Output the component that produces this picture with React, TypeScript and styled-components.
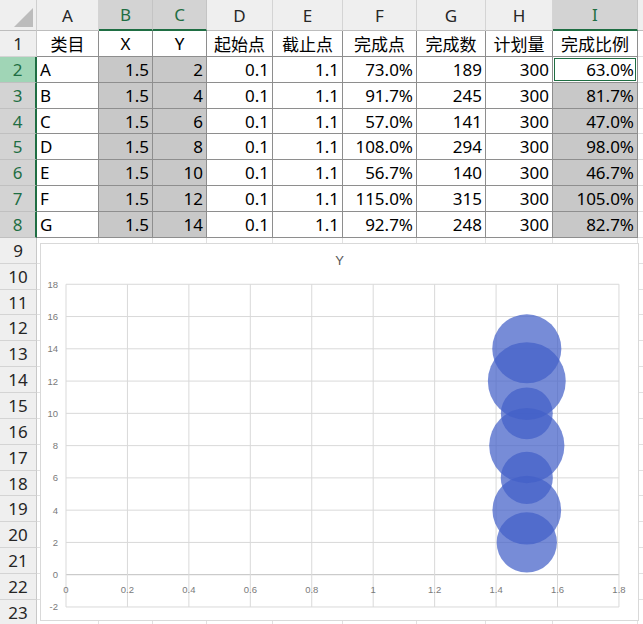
import React from 'react';
import styled, { createGlobalStyle, css } from 'styled-components';

const GlobalStyle = createGlobalStyle`
  html, body {
    margin: 0;
    padding: 0;
    background: #fff;
  }
  body {
    font-family: "Noto Sans", "Noto Sans CJK SC", sans-serif;
  }
`;

const COLS = [37, 62, 54, 54, 66, 70, 74, 69, 67, 85];
const LETTERS = ['A', 'B', 'C', 'D', 'E', 'F', 'G', 'H', 'I', ''];
const SELECTED_COLS = ['B', 'C', 'I'];
const GREEN = '#1f6e43';

const HEADERS = ['类目', 'X', 'Y', '起始点', '截止点', '完成点', '完成数', '计划量', '完成比例'];

const DATA: [string, string, string, string, string, string, string, string, string][] = [
  ['A', '1.5', '2', '0.1', '1.1', '73.0%', '189', '300', '63.0%'],
  ['B', '1.5', '4', '0.1', '1.1', '91.7%', '245', '300', '81.7%'],
  ['C', '1.5', '6', '0.1', '1.1', '57.0%', '141', '300', '47.0%'],
  ['D', '1.5', '8', '0.1', '1.1', '108.0%', '294', '300', '98.0%'],
  ['E', '1.5', '10', '0.1', '1.1', '56.7%', '140', '300', '46.7%'],
  ['F', '1.5', '12', '0.1', '1.1', '115.0%', '315', '300', '105.0%'],
  ['G', '1.5', '14', '0.1', '1.1', '92.7%', '248', '300', '82.7%'],
];

const Sheet = styled.div`
  position: relative;
  display: grid;
  grid-template-columns: ${COLS.map((c) => `${c}px`).join(' ')} 1fr;
  grid-template-rows: 31px repeat(23, 25.86px);
  width: 643px;
  height: 624px;
  overflow: hidden;
`;

const Corner = styled.div`
  position: relative;
  background: #efefef;
  border-right: 1px solid #cfcfcf;
  border-bottom: 1px solid #bdbdbd;

  &::after {
    content: '';
    position: absolute;
    right: 3px;
    bottom: 3px;
    width: 0;
    height: 0;
    border-left: 19px solid transparent;
    border-bottom: 19px solid #bcbcbc;
  }
`;

const ColHeader = styled.div<{ $selected?: boolean }>`
  box-sizing: border-box;
  display: flex;
  align-items: center;
  justify-content: center;
  font-size: 17px;
  color: #262626;
  background: #efefef;
  border-right: 1px solid #d4d4d4;
  border-bottom: 1px solid #bdbdbd;

  ${(p) =>
    p.$selected &&
    css`
      background: #d3d3d3;
      color: ${GREEN};
      border-bottom: 2px solid ${GREEN};
      border-right-color: #c4c4c4;
    `}
`;

type RowState = 'active' | 'selected' | 'none';

const RowHeader = styled.div<{ $state: RowState }>`
  box-sizing: border-box;
  display: flex;
  align-items: center;
  justify-content: center;
  font-size: 17px;
  color: #262626;
  background: #efefef;
  border-right: 1px solid #c8c8c8;
  border-bottom: 1px solid #d4d4d4;

  ${(p) =>
    p.$state !== 'none' &&
    css`
      color: ${GREEN};
      background: ${p.$state === 'active' ? '#a0d5b6' : '#d3d3d3'};
      border-right: 2px solid ${GREEN};
      border-bottom-color: #c0c0c0;
    `}
`;

const Cell = styled.div<{ $align?: 'left' | 'right' | 'center'; $framed?: boolean; $fill?: boolean; $active?: boolean }>`
  box-sizing: border-box;
  display: flex;
  align-items: center;
  justify-content: ${(p) => (p.$align === 'right' ? 'flex-end' : p.$align === 'center' ? 'center' : 'flex-start')};
  padding: 0 3px;
  font-size: 17px;
  color: #000;
  white-space: nowrap;
  overflow: hidden;
  background: ${(p) => (p.$fill ? '#c8c8c8' : '#fff')};
  border-right: 1px solid ${(p) => (p.$framed ? '#8e8e8e' : '#e1e1e1')};
  border-bottom: 1px solid ${(p) => (p.$framed ? '#8e8e8e' : '#e1e1e1')};

  ${(p) =>
    p.$active &&
    css`
      background: #fff;
      box-shadow: inset 0 0 0 1px #fff, inset 0 0 0 2px ${GREEN};
    `}
`;

const ChartBox = styled.div`
  position: absolute;
  left: 40px;
  top: 243px;
  width: 599px;
  height: 378px;
  box-sizing: border-box;
  background: #fff;
  border: 1px solid #d9d9d9;
`;

const ChartSvg = styled.svg`
  display: block;
  font-family: "Liberation Sans", "Noto Sans", sans-serif;
`;

// plot geometry (px inside the chart box)
const X0 = 25;
const X_UNIT = 307.2;
const Y0 = 330.7;
const Y_UNIT = 16.135;
const px = (x: number) => X0 + x * X_UNIT;
const py = (y: number) => Y0 - y * Y_UNIT;

const BubbleChart = () => {
  const xTicks = [0, 0.2, 0.4, 0.6, 0.8, 1, 1.2, 1.4, 1.6, 1.8];
  const yTicks = [18, 16, 14, 12, 10, 8, 6, 4, 2, 0, -2];
  const bubbles = DATA.map((r) => ({ x: parseFloat(r[1]), y: parseFloat(r[2]), size: parseFloat(r[8]) }));

  return (
    <ChartBox>
      <ChartSvg width={597} height={376} viewBox="0 0 597 376">
        <text x={298.5} y={21} textAnchor="middle" fontSize={13} fill="#595959">
          Y
        </text>
        {yTicks.map((t) => (
          <g key={`y${t}`}>
            <line
              x1={px(0)}
              x2={px(1.8)}
              y1={py(t)}
              y2={py(t)}
              stroke={t === 0 ? '#bfbfbf' : '#d9d9d9'}
              strokeWidth={1}
            />
            <text x={17} y={py(t) + 3.5} textAnchor="end" fontSize={9.5} fill="#7a7a7a">
              {t}
            </text>
          </g>
        ))}
        {xTicks.map((t) => (
          <g key={`x${t}`}>
            <line x1={px(t)} x2={px(t)} y1={py(18)} y2={py(-2)} stroke="#d9d9d9" strokeWidth={1} />
            <text x={px(t)} y={py(0) + 18} textAnchor="middle" fontSize={9.5} fill="#7a7a7a">
              {t}
            </text>
          </g>
        ))}
        {bubbles.map((b) => (
          <circle
            key={b.y}
            cx={px(b.x)}
            cy={py(b.y)}
            r={3.8 * Math.sqrt(b.size)}
            fill="rgba(66, 96, 200, 0.72)"
          />
        ))}
      </ChartSvg>
    </ChartBox>
  );
};

export default function App() {
  const rowState = (r: number): RowState => (r === 2 ? 'active' : r >= 3 && r <= 8 ? 'selected' : 'none');

  return (
    <>
      <GlobalStyle />
      <Sheet>
        <Corner />
        {LETTERS.map((l, i) => (
          <ColHeader key={`h${i}`} $selected={SELECTED_COLS.includes(l)}>
            {l}
          </ColHeader>
        ))}

        <RowHeader $state="none">1</RowHeader>
        {HEADERS.map((h) => (
          <Cell key={h} $align="center" $framed>
            {h}
          </Cell>
        ))}
        <Cell />

        {DATA.map((row, ri) => {
          const r = ri + 2;
          return (
            <React.Fragment key={r}>
              <RowHeader $state={rowState(r)}>{r}</RowHeader>
              {row.map((v, ci) => (
                <Cell
                  key={ci}
                  $align={ci === 0 ? 'left' : 'right'}
                  $framed
                  $fill={ci === 1 || ci === 2 || ci === 8}
                  $active={ci === 8 && r === 2}
                >
                  {v}
                </Cell>
              ))}
              <Cell />
            </React.Fragment>
          );
        })}

        {Array.from({ length: 15 }, (_, i) => i + 9).map((r) => (
          <React.Fragment key={r}>
            <RowHeader $state="none">{r}</RowHeader>
            {LETTERS.map((_, ci) => (
              <Cell key={ci} />
            ))}
          </React.Fragment>
        ))}

        <BubbleChart />
      </Sheet>
    </>
  );
}
